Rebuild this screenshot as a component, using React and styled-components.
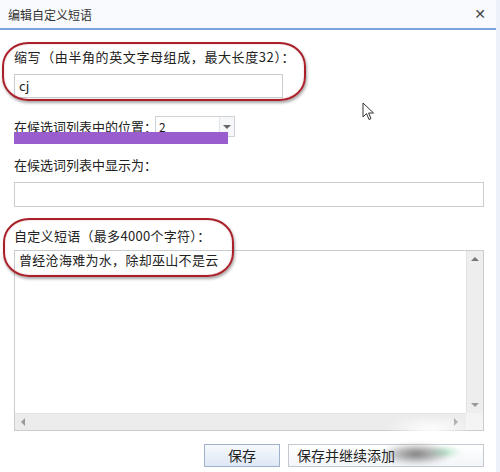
import styled, { createGlobalStyle } from 'styled-components'

const GlobalStyle = createGlobalStyle`
  html, body { margin: 0; padding: 0; }
  body {
    font-family: "Noto Sans CJK SC", "Noto Sans", "Liberation Sans", sans-serif;
    color: #222;
  }
`

const Page = styled.div`
  width: 500px;
  height: 472px;
  display: flex;
  background: #edf2f8;
  overflow: hidden;
`

const Dialog = styled.div`
  position: relative;
  width: 496px;
  height: 472px;
  background: #fff;
  display: flex;
  flex-direction: column;
`

const TitleBar = styled.div`
  height: 28px;
  flex: none;
  display: flex;
  align-items: center;
  justify-content: space-between;
  padding: 0 8px 0 8px;
  background: #f8fafd;
  border-bottom: 2px solid #7ba3dd;
  font-size: 12px;
  color: #333;
`

const Close = styled.span`
  font-family: "DejaVu Sans", sans-serif;
  font-size: 14px;
  font-weight: bold;
  color: #444;
  margin-right: 2px;
`

const Body = styled.div`
  display: flex;
  flex-direction: column;
  padding: 18px 12px 0 14px;
`

const Label = styled.div`
  font-size: 13px;
  line-height: 18px;
  height: 18px;
  letter-spacing: ${(p) => p.Spacing || 0}px;
  margin-top: ${(p) => p.Top || 0}px;
  white-space: nowrap;
  color: #222;
`

const Input = styled.div`
  box-sizing: border-box;
  width: ${(p) => p.Width || '470px'};
  height: ${(p) => p.Height || 25}px;
  margin-top: ${(p) => p.Top || 0}px;
  border: 1px solid #c9cdd2;
  background: #fff;
  font-size: 13px;
  line-height: ${(p) => (p.Height || 25) - 2}px;
  padding-left: 4px;
`

const Row = styled.div`
  display: flex;
  align-items: center;
  margin-top: ${(p) => p.Top || 0}px;
  position: relative;
`

const Select = styled.div`
  box-sizing: border-box;
  width: 80px;
  height: 21px;
  border: 1px solid #cfd3d8;
  display: flex;
  align-items: center;
  font-size: 12px;
  padding-left: 3px;
  margin-left: -2px;
`

const SelectValue = styled.span`
  flex: 1;
`

const SelectArrow = styled.span`
  width: 14px;
  height: 19px;
  border-left: 1px solid #e2e4e7;
  display: flex;
  align-items: center;
  justify-content: center;
  background: #f6f7f8;
  &::after {
    content: '';
    border-left: 4px solid transparent;
    border-right: 4px solid transparent;
    border-top: 4px solid #666;
  }
`

const TextArea = styled.div`
  box-sizing: border-box;
  width: 470px;
  height: 181px;
  margin-top: 5px;
  border: 1px solid #c9cdd2;
  display: grid;
  grid-template-columns: 1fr 17px;
  grid-template-rows: 1fr 17px;
`

const TextContent = styled.div`
  font-size: 13px;
  line-height: 18px;
  letter-spacing: 0.3px;
  padding: 0 0 0 4px;
`

const VScroll = styled.div`
  background: #eeeeee;
  border-left: 1px solid #e2e2e2;
  display: flex;
  flex-direction: column;
  justify-content: space-between;
  align-items: center;
  padding: 6px 0;
`

const HScroll = styled.div`
  background: #ececec;
  border-top: 1px solid #e2e2e2;
  display: flex;
  justify-content: space-between;
  align-items: center;
  padding: 0 8px 0 6px;
`

const Corner = styled.div`
  background: #f4f4f4;
`

const Tri = styled.span`
  width: 0;
  height: 0;
  ${(p) =>
    p.Dir === 'up'
      ? 'border-left:4px solid transparent;border-right:4px solid transparent;border-bottom:4px solid #777;'
      : p.Dir === 'down'
      ? 'border-left:4px solid transparent;border-right:4px solid transparent;border-top:4px solid #999;'
      : p.Dir === 'left'
      ? 'border-top:4px solid transparent;border-bottom:4px solid transparent;border-right:4px solid #999;'
      : 'border-top:4px solid transparent;border-bottom:4px solid transparent;border-left:4px solid #999;'}
`

const Buttons = styled.div`
  display: flex;
  justify-content: flex-end;
  gap: 8px;
  margin-top: 13px;
`

const Button = styled.div`
  box-sizing: border-box;
  height: 23px;
  width: ${(p) => p.Width}px;
  border: 1px solid ${(p) => (p.Primary ? '#9fb2cc' : '#c3c9d1')};
  background: ${(p) =>
    p.Primary ? 'linear-gradient(#f6f9fd, #dde7f4)' : 'linear-gradient(#ffffff, #f3f5f8)'};
  font-size: 14px;
  line-height: 21px;
  text-align: ${(p) => (p.Primary ? 'center' : 'left')};
  padding-left: ${(p) => (p.Primary ? 0 : 8)}px;
  color: #222;
`

const Ring = styled.div`
  position: absolute;
  left: ${(p) => p.X}px;
  top: ${(p) => p.Y}px;
  width: ${(p) => p.W}px;
  height: ${(p) => p.H}px;
  box-sizing: border-box;
  border: 2px solid #a9222b;
  border-radius: 26px / 24px;
  box-shadow: 1px 2px 3px rgba(0, 0, 0, 0.35), inset 0 0 2px rgba(169, 34, 43, 0.3);
  pointer-events: none;
`

const Marker = styled.div`
  position: absolute;
  left: 0;
  top: 16px;
  width: 214px;
  height: 12px;
  background: #9a5dcd;
`

const Pointer = styled.svg`
  position: absolute;
  left: 362px;
  top: 102px;
`

const Smudge = styled.div`
  position: absolute;
  left: 378px;
  top: 418px;
  width: 92px;
  height: 50px;
  pointer-events: none;
  background:
    radial-gradient(ellipse 36px 11px at 38px 36px, rgba(105, 105, 105, 0.9), rgba(150, 150, 150, 0) 100%),
    radial-gradient(ellipse 18px 6px at 66px 34px, rgba(140, 220, 170, 0.7), rgba(140, 220, 170, 0) 100%),
    radial-gradient(ellipse 44px 18px at 52px 12px, rgba(255, 255, 255, 0.95), rgba(255, 255, 255, 0) 100%);
  filter: blur(2px);
`

const App = () => {
  return (
    <>
      <GlobalStyle />
      <Page>
        <Dialog>
          <TitleBar>
            <span>编辑自定义短语</span>
            <Close>✕</Close>
          </TitleBar>
          <Body>
            <Label Spacing={0.6}>缩写（由半角的英文字母组成，最大长度32）：</Label>
            <Input Top={8} Width="269px" Height={24}>cj</Input>
            <Row Top={18}>
              <Label>在候选词列表中的位置：</Label>
              <Select>
                <SelectValue>2</SelectValue>
                <SelectArrow />
              </Select>
              <Marker />
            </Row>
            <Label Top={19}>在候选词列表中显示为：</Label>
            <Input Top={8} />
            <Label Top={20} Spacing={0.3}>自定义短语（最多4000个字符）：</Label>
            <TextArea>
              <TextContent>曾经沧海难为水，除却巫山不是云</TextContent>
              <VScroll>
                <Tri Dir="up" />
                <Tri Dir="down" />
              </VScroll>
              <HScroll>
                <Tri Dir="left" />
                <Tri Dir="right" />
              </HScroll>
              <Corner />
            </TextArea>
            <Buttons>
              <Button Primary Width={76}>保存</Button>
              <Button Width={196}>保存并继续添加</Button>
            </Buttons>
          </Body>
          <Ring X={2} Y={42} W={304} H={59} />
          <Ring X={3} Y={218} W={231} H={59} />
          <Pointer width="13" height="19" viewBox="0 0 13 19">
            <path d="M1 1 L1 15 L4.5 11.5 L7 17.5 L9 16.6 L6.6 11 L11.5 11 Z" fill="#fff" stroke="#333" strokeWidth="1" strokeLinejoin="round" />
          </Pointer>
          <Smudge />
        </Dialog>
      </Page>
    </>
  )
}

export default App
